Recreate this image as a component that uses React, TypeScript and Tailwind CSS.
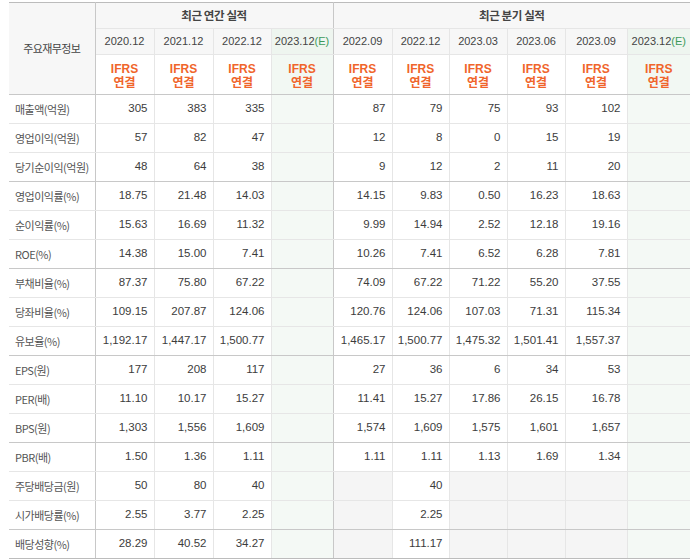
import React from "react";

type Cell = string | null;

const rows: [string, Cell[]][] = [
  ["매출액(억원)", ["305", "383", "335", "", "87", "79", "75", "93", "102", ""]],
  ["영업이익(억원)", ["57", "82", "47", "", "12", "8", "0", "15", "19", ""]],
  ["당기순이익(억원)", ["48", "64", "38", "", "9", "12", "2", "11", "20", ""]],
  ["영업이익률(%)", ["18.75", "21.48", "14.03", "", "14.15", "9.83", "0.50", "16.23", "18.63", ""]],
  ["순이익률(%)", ["15.63", "16.69", "11.32", "", "9.99", "14.94", "2.52", "12.18", "19.16", ""]],
  ["ROE(%)", ["14.38", "15.00", "7.41", "", "10.26", "7.41", "6.52", "6.28", "7.81", ""]],
  ["부채비율(%)", ["87.37", "75.80", "67.22", "", "74.09", "67.22", "71.22", "55.20", "37.55", ""]],
  ["당좌비율(%)", ["109.15", "207.87", "124.06", "", "120.76", "124.06", "107.03", "71.31", "115.34", ""]],
  ["유보율(%)", ["1,192.17", "1,447.17", "1,500.77", "", "1,465.17", "1,500.77", "1,475.32", "1,501.41", "1,557.37", ""]],
  ["EPS(원)", ["177", "208", "117", "", "27", "36", "6", "34", "53", ""]],
  ["PER(배)", ["11.10", "10.17", "15.27", "", "11.41", "15.27", "17.86", "26.15", "16.78", ""]],
  ["BPS(원)", ["1,303", "1,556", "1,609", "", "1,574", "1,609", "1,575", "1,601", "1,657", ""]],
  ["PBR(배)", ["1.50", "1.36", "1.11", "", "1.11", "1.11", "1.13", "1.69", "1.34", ""]],
  ["주당배당금(원)", ["50", "80", "40", "", null, "40", null, null, null, ""]],
  ["시가배당률(%)", ["2.55", "3.77", "2.25", "", null, "2.25", null, null, null, ""]],
  ["배당성향(%)", ["28.29", "40.52", "34.27", "", null, "111.17", null, null, null, ""]],
];

const dates = ["2020.12", "2021.12", "2022.12", "2023.12", "2022.09", "2022.12", "2023.03", "2023.06", "2023.09", "2023.12"];
const estimate = [3, 9];
const widths = ["w-[59px]", "w-[59px]", "w-[58px]", "w-[62px]", "w-[59px]", "w-[57px]", "w-[58px]", "w-[58px]", "w-[62px]", "w-[63px]"];

const kr = "font-['Noto_Sans_CJK_KR',sans-serif]";
const num = "font-['Liberation_Sans','Noto_Sans_CJK_KR',sans-serif]";

export default function App() {
  return (
    <div className="bg-white w-[699px] h-[560px] pt-[2px] pl-[9px]">
      <table className="border-collapse table-fixed w-[681px] text-[#333]">
        <colgroup>
          <col className="w-[86px]" />
          {widths.map((w, i) => (
            <col key={i} className={w} />
          ))}
        </colgroup>
        <thead>
          <tr className="h-[26px] border-t border-[#bcbcbc]">
            <th
              rowSpan={3}
              className={`${kr} bg-[#f7f7f7] text-[11px] font-normal tracking-[-0.6px] text-[#444] border-r border-b border-r-[#c8c8c8] border-b-[#c8c8c8]`}
            >
              주요재무정보
            </th>
            <th colSpan={4} className={`${kr} bg-[#f7f7f7] text-[11.5px] font-bold tracking-[-0.4px] text-[#444] border-b border-[#e6e6e6]`}>
              최근 연간 실적
            </th>
            <th colSpan={6} className={`${kr} bg-[#f7f7f7] text-[11.5px] font-bold tracking-[-0.4px] text-[#444] border-b border-l border-b-[#e6e6e6] border-l-[#c8c8c8]`}>
              최근 분기 실적
            </th>
          </tr>
          <tr className="h-[26px]">
            {dates.map((d, i) => (
              <th
                key={i}
                className={`${num} text-[11px] font-normal text-[#444] border-b border-l border-b-[#e6e6e6] whitespace-nowrap ${
                  estimate.includes(i) ? "bg-[#eef5ef]" : "bg-[#f7f7f7]"
                } ${i === 4 ? "border-l-[#c8c8c8]" : "border-l-[#e6e6e6]"}`}
              >
                {d}
                {estimate.includes(i) && <span className="text-[#3d9a5b]">(E)</span>}
              </th>
            ))}
          </tr>
          <tr className="h-[40px]">
            {dates.map((_, i) => (
              <th
                key={i}
                className={`${num} text-[12px] leading-[14px] pt-[2px] font-bold text-[#f0652b] border-b border-l border-b-[#c8c8c8] ${
                  estimate.includes(i) ? "bg-[#f2f8f3]" : "bg-white"
                } ${i === 4 ? "border-l-[#c8c8c8]" : "border-l-[#e6e6e6]"}`}
              >
                <div>IFRS</div>
                <div>연결</div>
              </th>
            ))}
          </tr>
        </thead>
        <tbody>
          {rows.map(([label, cells], r) => {
            const groupEnd = r % 3 === 2 || r === rows.length - 1;
            const bottom = r === rows.length - 1 ? "border-b-[#bcbcbc]" : groupEnd ? "border-b-[#c8c8c8]" : "border-b-[#e6e6e6]";
            return (
              <tr key={r} className="h-[29px]">
                <td className={`${kr} text-[11px] tracking-[-0.5px] text-[#555] pl-[6px] border-b border-r border-r-[#c8c8c8] whitespace-nowrap ${bottom}`}>
                  {label}
                </td>
                {cells.map((c, i) => (
                  <td
                    key={i}
                    className={`${num} text-[11.5px] text-right pr-[6px] text-[#3c3c3c] border-b border-l whitespace-nowrap ${bottom} ${
                      i === 4 ? "border-l-[#c8c8c8]" : "border-l-[#e6e6e6]"
                    } ${estimate.includes(i) ? "bg-[#f4f9f5]" : c === null ? "bg-[#f5f5f5]" : "bg-white"}`}
                  >
                    {c}
                  </td>
                ))}
              </tr>
            );
          })}
        </tbody>
      </table>
    </div>
  );
}
